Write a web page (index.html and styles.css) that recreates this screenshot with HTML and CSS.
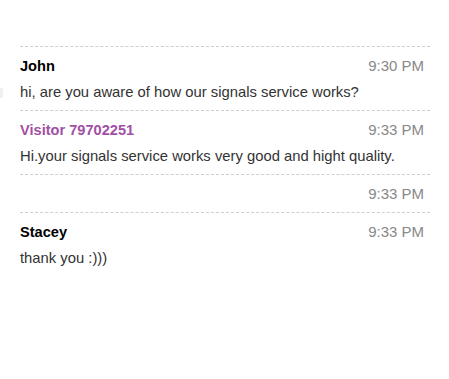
FILE: index.html
```html
<!DOCTYPE html>
<html>
<head>
<meta charset="utf-8">
<link rel="stylesheet" href="styles.css">
</head>
<body>
<div class="edge"></div>
<div class="chat">
  <div class="msg">
    <div class="head"><span class="name">John</span><span class="time">9:30 PM</span></div>
    <div class="text">hi, are you aware of how our signals service works?</div>
  </div>
  <div class="msg">
    <div class="head"><span class="name visitor">Visitor 79702251</span><span class="time">9:33 PM</span></div>
    <div class="text">Hi.your signals service works very good and hight quality.</div>
  </div>
  <div class="msg">
    <div class="head"><span class="name"></span><span class="time">9:33 PM</span></div>
  </div>
  <div class="msg">
    <div class="head"><span class="name">Stacey</span><span class="time">9:33 PM</span></div>
    <div class="text">thank you :)))</div>
  </div>
</div>
</body>
</html>
```
FILE: styles.css
```css
html, body {
  margin: 0;
  padding: 0;
  background: #fff;
}
body {
  font-family: "Liberation Sans", Arial, sans-serif;
  font-size: 15px;
  color: #333;
  position: relative;
  width: 449px;
  height: 379px;
  overflow: hidden;
}
.edge {
  position: absolute;
  left: 0;
  top: 88px;
  width: 3px;
  height: 10px;
  background: #f0f0f0;
}
.chat {
  padding: 46px 19px 0 20px;
}
.msg {
  border-top: 1px dashed #cfcfcf;
  padding: 11px 6px 10px 0;
}
.head {
  display: flex;
  justify-content: space-between;
  line-height: 16px;
}
.name {
  font-weight: bold;
  color: #000;
  font-size: 14.6px;
}
.name.visitor {
  color: #a24fa6;
}
.time {
  color: #888;
}
.text {
  margin-top: 10px;
  line-height: 16px;
  font-size: 14.8px;
  color: #333;
}
```
